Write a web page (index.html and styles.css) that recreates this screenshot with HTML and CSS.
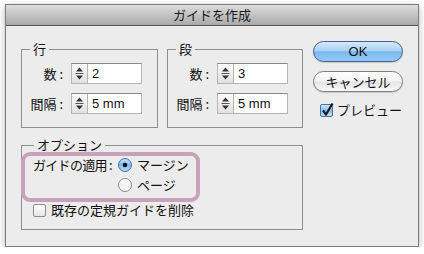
FILE: index.html
```html
<!DOCTYPE html>
<html lang="ja">
<head>
    <meta charset="UTF-8">
    <meta name="viewport" content="width=device-width, initial-scale=1.0">
    <title>ガイドを作成</title>
    <link rel="stylesheet" href="styles.css">
</head>
<body>

<div class="window">
    <div class="titlebar">ガイドを作成</div>
    <div class="dialog">
        <div class="main">
            <div class="top-row">
                <fieldset class="group grid-group">
                    <legend>行</legend>
                    <div class="field-row">
                        <label>数 :</label>
                        <div class="num-field">
                            <span class="spinner"><svg width="11" height="17" viewBox="0 0 11 17"><path d="M2 6.5h7L5.5 2.5z" fill="#333"/><path d="M1.5 8.5h8" stroke="#555" stroke-width="1"/><path d="M2 10.5h7L5.5 14.5z" fill="#333"/></svg></span>
                            <span class="value">2</span>
                        </div>
                    </div>
                    <div class="field-row">
                        <label>間隔 :</label>
                        <div class="num-field">
                            <span class="spinner"><svg width="11" height="17" viewBox="0 0 11 17"><path d="M2 6.5h7L5.5 2.5z" fill="#333"/><path d="M1.5 8.5h8" stroke="#555" stroke-width="1"/><path d="M2 10.5h7L5.5 14.5z" fill="#333"/></svg></span>
                            <span class="value">5 mm</span>
                        </div>
                    </div>
                </fieldset>
                <fieldset class="group grid-group narrow">
                    <legend>段</legend>
                    <div class="field-row">
                        <label>数 :</label>
                        <div class="num-field">
                            <span class="spinner"><svg width="11" height="17" viewBox="0 0 11 17"><path d="M2 6.5h7L5.5 2.5z" fill="#333"/><path d="M1.5 8.5h8" stroke="#555" stroke-width="1"/><path d="M2 10.5h7L5.5 14.5z" fill="#333"/></svg></span>
                            <span class="value">3</span>
                        </div>
                    </div>
                    <div class="field-row">
                        <label>間隔 :</label>
                        <div class="num-field">
                            <span class="spinner"><svg width="11" height="17" viewBox="0 0 11 17"><path d="M2 6.5h7L5.5 2.5z" fill="#333"/><path d="M1.5 8.5h8" stroke="#555" stroke-width="1"/><path d="M2 10.5h7L5.5 14.5z" fill="#333"/></svg></span>
                            <span class="value">5 mm</span>
                        </div>
                    </div>
                </fieldset>
            </div>

            <fieldset class="group options">
                <legend>オプション</legend>
                <div class="apply-box">
                    <div class="apply-label">ガイドの適用 :</div>
                    <div class="radio-list">
                        <div class="radio-item">
                            <svg class="radio" width="14" height="14" viewBox="0 0 14 14">
                                <defs>
                                    <linearGradient id="blue" x1="0" y1="0" x2="0" y2="1">
                                        <stop offset="0" stop-color="#cfe5fb"/>
                                        <stop offset="0.5" stop-color="#7db9ee"/>
                                        <stop offset="1" stop-color="#b9dcfa"/>
                                    </linearGradient>
                                </defs>
                                <circle cx="7" cy="7" r="6.5" fill="url(#blue)" stroke="#4b6ea6"/>
                                <circle cx="7" cy="7" r="2.3" fill="#111"/>
                            </svg>
                            <span>マージン</span>
                        </div>
                        <div class="radio-item">
                            <svg class="radio" width="14" height="14" viewBox="0 0 14 14">
                                <defs>
                                    <linearGradient id="white" x1="0" y1="0" x2="0" y2="1">
                                        <stop offset="0" stop-color="#ffffff"/>
                                        <stop offset="0.5" stop-color="#f1f1f1"/>
                                        <stop offset="1" stop-color="#fdfdfd"/>
                                    </linearGradient>
                                </defs>
                                <circle cx="7" cy="7" r="6.5" fill="url(#white)" stroke="#8b8b8b"/>
                            </svg>
                            <span>ページ</span>
                        </div>
                    </div>
                </div>
                <div class="check-row">
                    <span class="checkbox"></span>
                    <span>既存の定規ガイドを削除</span>
                </div>
            </fieldset>
        </div>

        <div class="buttons">
            <div class="btn btn-ok">OK</div>
            <div class="btn btn-cancel">キャンセル</div>
            <div class="preview">
                <svg class="checked" width="14" height="14" viewBox="0 0 14 14">
                    <defs>
                        <linearGradient id="blueBox" x1="0" y1="0" x2="0" y2="1">
                            <stop offset="0" stop-color="#d3e8fb"/>
                            <stop offset="0.5" stop-color="#85bff0"/>
                            <stop offset="1" stop-color="#c2e0fa"/>
                        </linearGradient>
                    </defs>
                    <rect x="0.5" y="1.5" width="12" height="12" rx="1.5" fill="url(#blueBox)" stroke="#4b6ea6"/>
                    <path d="M3 7.5l3 4L12.5 0.5" fill="none" stroke="#1a1a1a" stroke-width="2.2" stroke-linejoin="round"/>
                </svg>
                <span>プレビュー</span>
            </div>
        </div>
    </div>
</div>

</body>
</html>
```

FILE: styles.css
```css
body {
    margin: 0;
    padding: 0;
    background-color: #fff;
    font-family: "Noto Sans CJK JP", sans-serif;
    font-size: 13px;
    color: #111;
}
.window {
    margin: 4px 0 0 5px;
    width: 414px;
    height: 243px;
    box-sizing: border-box;
    border: 1px solid #7b7b7b;
    background-color: #ececec;
    box-shadow: 0 2px 7px rgba(0, 0, 0, 0.3);
    display: flex;
    flex-direction: column;
}
.titlebar {
    height: 21px;
    box-sizing: border-box;
    border-bottom: 1px solid #555;
    background: linear-gradient(#dcdcdc, #aaaaaa);
    text-align: center;
    line-height: 20px;
    color: #1a1a1a;
}
.dialog {
    display: flex;
    gap: 10px;
    padding: 15px 0 0 15px;
}
.main {
    width: 282px;
    display: flex;
    flex-direction: column;
    gap: 9px;
}
.top-row {
    display: flex;
    gap: 9px;
}
.group {
    margin: 0;
    border: 1px solid #8e8e8e;
    min-width: 0;
}
.group legend {
    padding: 0 3px;
    margin-left: 8px;
    height: 16px;
    line-height: 16px;
}
.grid-group {
    width: 137px;
    box-sizing: border-box;
    padding: 6px 0 13px;
    display: flex;
    flex-direction: column;
    gap: 9px;
}
.grid-group.narrow {
    width: 136px;
}
.field-row {
    display: flex;
    align-items: center;
    height: 21px;
}
.field-row label {
    width: 41px;
    margin-right: 8px;
    text-align: right;
    line-height: 16px;
}
.num-field {
    display: flex;
    width: 71px;
    height: 21px;
    box-sizing: border-box;
    border: 1px solid #b5b5b5;
    border-top-color: #8a8a8a;
    background-color: #fff;
}
.spinner {
    width: 15px;
    border-right: 1px solid #b5b5b5;
    background: linear-gradient(#fbfbfb, #e1e1e1);
    display: flex;
    align-items: center;
    justify-content: center;
}
.value {
    padding-left: 4px;
    font-family: "Liberation Sans", Arial, sans-serif;
    font-size: 13px;
    line-height: 19px;
}
.options {
    width: 282px;
    box-sizing: border-box;
    padding: 0 0 11px;
}
.options legend {
    margin-left: 12px;
}
.apply-box {
    margin: -1px 0 0 -1px;
    width: 179px;
    height: 50px;
    box-sizing: border-box;
    border: 4px solid #c8a2b9;
    border-radius: 9px;
    padding: 2px 0 0 8px;
    display: flex;
}
.apply-label {
    width: 85px;
    line-height: 14px;
    letter-spacing: -0.7px;
    white-space: nowrap;
}
.radio-list {
    display: flex;
    flex-direction: column;
    gap: 6px;
}
.radio-item {
    display: flex;
    align-items: center;
    gap: 5px;
    height: 14px;
    line-height: 14px;
}
.check-row {
    display: flex;
    align-items: center;
    gap: 5px;
    height: 16px;
    margin-left: 11px;
    line-height: 16px;
}
.checkbox {
    width: 13px;
    height: 13px;
    box-sizing: border-box;
    border: 1px solid #8c8c8c;
    border-radius: 2px;
    background: linear-gradient(#fff, #e6e6e6);
}
.buttons {
    width: 90px;
    display: flex;
    flex-direction: column;
}
.btn {
    height: 21px;
    box-sizing: border-box;
    border: 1px solid #7e7e7e;
    border-radius: 11px;
    text-align: center;
    line-height: 19px;
    box-shadow: 0 1px 1px rgba(0, 0, 0, 0.15);
}
.btn-ok {
    font-family: "Liberation Sans", Arial, sans-serif;
    border-color: #3e5f98;
    background: linear-gradient(#d4e9fb 0%, #a9d2f6 45%, #7ab8ef 52%, #95caf4 100%);
}
.btn-cancel {
    margin-top: 9px;
    background: linear-gradient(#ffffff 0%, #f4f4f4 48%, #e4e4e4 52%, #f8f8f8 100%);
}
.preview {
    display: flex;
    align-items: center;
    gap: 3px;
    height: 14px;
    margin: 11px 0 0 7px;
    line-height: 14px;
}
.checked {
    overflow: visible;
}
```
